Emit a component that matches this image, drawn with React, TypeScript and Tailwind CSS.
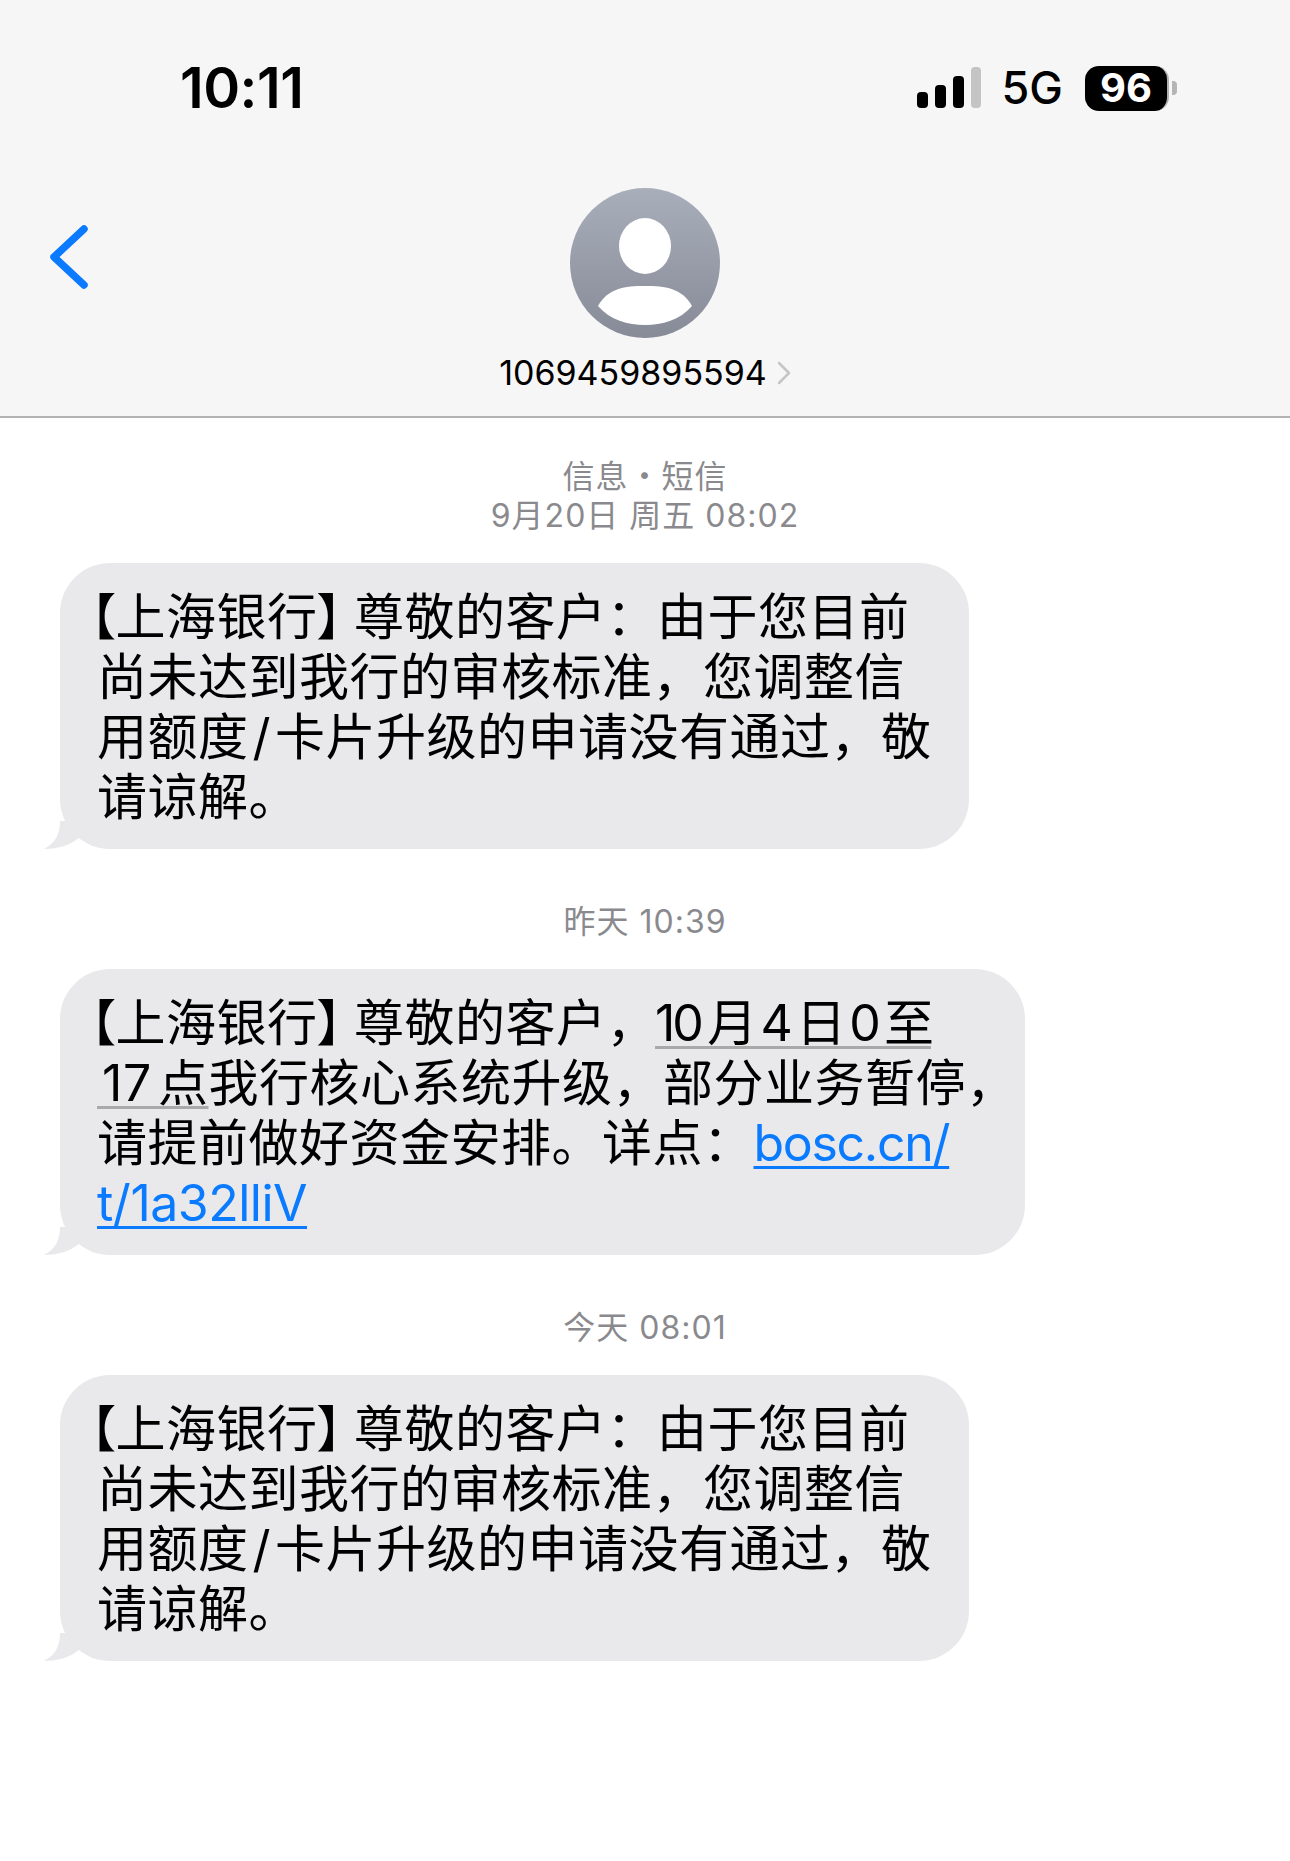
const cjk = "font-['Inter','Noto_Sans_CJK_SC',sans-serif]";

function Tail() {
  return (
    <svg className="absolute -left-[16px] bottom-0" width="50" height="28" viewBox="0 0 50 28">
      <path d="M16 0 C16 12 12 22 0 28 C12 28 26 25 36 16 L44 10 L44 0 Z" fill="#e9e9eb" />
    </svg>
  );
}

function Bubble({ width, lines }: { width: string; lines: React.ReactNode[] }) {
  return (
    <div className={`relative ml-[60px] rounded-[50px] bg-[#e9e9eb] pt-[24px] pb-[22px] pl-[37px] text-[50px] leading-[60px] tracking-[0.5px] text-black ${width}`}>
      <Tail />
      <div className="relative whitespace-nowrap [text-autospace:normal]">
        {lines.map((line, i) => (
          <div key={i}>{line}</div>
        ))}
      </div>
    </div>
  );
}

function Stamp({ children }: { children: React.ReactNode }) {
  return (
    <div className="text-center text-[32px] leading-[39px] tracking-[1px] text-[#8a8a8e]">{children}</div>
  );
}

const Bank = () => (
  <>
    <span className="-ml-[7px] [font-feature-settings:'palt']">【</span>上海银行<span className="mr-[11px] [font-feature-settings:'palt']">】</span>
  </>
);

const rejectLines = [
  <><Bank />尊敬的客户：由于您目前</>,
  "尚未达到我行的审核标准，您调整信",
  <>用额度<span className="mx-[4px]">/</span>卡片升级的申请没有通过，敬</>,
  "请谅解。",
];

export default function App() {
  return (
    <div className={`min-h-[1861px] w-[1290px] bg-white ${cjk}`}>
      <header className="h-[418px] border-b-2 border-[#b2b2b2] bg-[#f6f6f6]">
        <div className="flex items-center justify-between pt-[58px] pr-[113px] pl-[180px]">
          <span className="text-[56px] leading-[60px] font-semibold tracking-[-0.5px] text-black">10:11</span>
          <div className="flex items-center">
            <svg width="64" height="42" viewBox="0 0 64 42" className="-mt-[1px]">
              <rect x="0" y="25" width="11" height="16" rx="4" fill="#000" />
              <rect x="18" y="18" width="11" height="23" rx="4" fill="#000" />
              <rect x="36" y="9" width="11" height="32" rx="4" fill="#000" />
              <rect x="54" y="0" width="10" height="41" rx="4" fill="#c4c4c4" />
            </svg>
            <span className="ml-[21px] text-[45px] leading-[50px] font-medium text-black">5G</span>
            <div className="ml-[22px] flex h-[45px] w-[84px] items-center justify-center rounded-[14px] border-r-2 border-[#b0b0b0] bg-black text-[40px] leading-none font-bold text-white">
              96
            </div>
            <div className="ml-[3px] h-[14px] w-[5px] rounded-r-[4px] bg-[#b5b5b5]" />
          </div>
        </div>

        <div className="relative mt-[70px] flex flex-col items-center">
          <svg className="absolute top-[35px] left-[49px]" width="40" height="68" viewBox="0 0 40 68" fill="none">
            <path d="M35 6 L5 34 L35 62" stroke="#0a7aff" strokeWidth="7.5" strokeLinecap="round" strokeLinejoin="round" />
          </svg>
          <svg width="150" height="150" viewBox="0 0 150 150">
            <defs>
              <linearGradient id="avatar" x1="0" y1="0" x2="0" y2="1">
                <stop offset="0" stopColor="#a9aebb" />
                <stop offset="1" stopColor="#878b97" />
              </linearGradient>
            </defs>
            <circle cx="75" cy="75" r="75" fill="url(#avatar)" />
            <ellipse cx="75" cy="58" rx="26" ry="28" fill="#fff" />
            <path d="M28 118 C38 100 55 98 75 98 C95 98 112 100 122 118 C110 132 92 137 75 137 C58 137 40 132 28 118 Z" fill="#fff" />
          </svg>
          <div className="mt-[15px] flex items-center">
            <span className="text-[34px] leading-[40px] text-black">1069459895594</span>
            <svg className="ml-[10px]" width="14" height="24" viewBox="0 0 14 24" fill="none">
              <path d="M2 2 L12 12 L2 22" stroke="#c5c5c7" strokeWidth="2.5" strokeLinecap="round" strokeLinejoin="round" />
            </svg>
          </div>
        </div>
      </header>

      <main className="pt-[39px]">
        <Stamp>信息・短信</Stamp>
        <Stamp>9月20日 周五 08:02</Stamp>
        <div className="mt-[28px]">
          <Bubble width="w-[909px]" lines={rejectLines} />
        </div>
        <div className="mt-[53px] mb-[28px]">
          <Stamp>昨天 10:39</Stamp>
        </div>
        <Bubble
          width="w-[965px]"
          lines={[
            <>
              <Bank />尊敬的客户，
              <span className="-ml-[2px] tracking-[-3px] underline decoration-[#a9a9a9] decoration-[3px] underline-offset-[5px]">10月4日0至</span>
            </>,
            <>
              <span className="underline decoration-[#a9a9a9] decoration-[3px] underline-offset-[5px]">{"\u200a"}17点</span>
              我行核心系统升级，部分业务暂停，
            </>,
            <>
              请提前做好资金安排。详点：
              <span className="tracking-[-1.3px] text-[#0a7aff] underline decoration-[3px] underline-offset-[5px]">bosc.cn/</span>
            </>,
            <span className="tracking-[-0.5px] text-[#0a7aff] underline decoration-[3px] underline-offset-[5px]">t/1a32lliV</span>,
          ]}
        />
        <div className="mt-[53px] mb-[28px]">
          <Stamp>今天 08:01</Stamp>
        </div>
        <Bubble width="w-[909px]" lines={rejectLines} />
      </main>
    </div>
  );
}
